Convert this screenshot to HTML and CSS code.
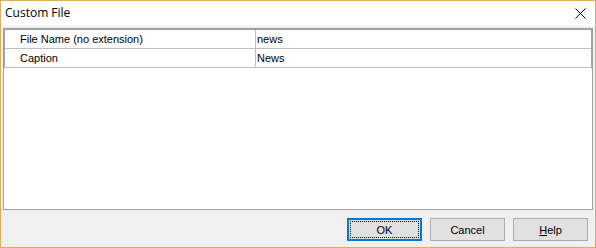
FILE: index.html
```html
<!DOCTYPE html>
<html>
<head>
<meta charset="utf-8">
<link rel="stylesheet" href="styles.css">
</head>
<body>
<div class="window">
  <div class="titlebar">
    <span class="title">Custom File</span>
    <svg class="close" width="11" height="11" viewBox="0 0 11 11"><path d="M0.5 0.5 L10.5 10.5 M10.5 0.5 L0.5 10.5" stroke="#000" stroke-width="1" fill="none"/></svg>
  </div>
  <div class="client">
    <div class="gridbox">
      <div class="grid">
        <div class="row">
          <div class="cell label">File Name (no extension)</div>
          <div class="cell value">news</div>
        </div>
        <div class="row">
          <div class="cell label">Caption</div>
          <div class="cell value">News</div>
        </div>
      </div>
    </div>
    <div class="buttons">
      <button class="btn default"><span class="focus">OK</span></button>
      <button class="btn">Cancel</button>
      <button class="btn"><u>H</u>elp</button>
    </div>
  </div>
</div>
</body>
</html>
```
FILE: styles.css
```css
html, body {
  margin: 0;
  padding: 0;
  background: #ffffff;
}
.window {
  width: 596px;
  height: 248px;
  box-sizing: border-box;
  border: 1px solid #e2aa5e;
  display: flex;
  flex-direction: column;
  font-family: "Liberation Sans", Arial, sans-serif;
  font-size: 11px;
  color: #000;
}
.titlebar {
  height: 25px;
  flex: none;
  background: #fff;
  display: flex;
  align-items: center;
  justify-content: space-between;
  padding-left: 4px;
  padding-right: 9px;
}
.title {
  font-family: "Open Sans", "Noto Sans", sans-serif;
  font-size: 12px;
  line-height: 16px;
  margin-top: -2px;
}
.close {
  display: block;
  margin-top: -1px;
}
.client {
  flex: 1;
  background: #f0f0f0;
  padding: 2px 2px 6px 2px;
  display: flex;
  flex-direction: column;
}
.gridbox {
  height: 182px;
  box-sizing: border-box;
  border: 1px solid #a0a0a0;
  background: #fff;
}
.grid {
  border: 1px solid #a0a0a0;
  border-bottom: none;
}
.row {
  display: flex;
  height: 19px;
  box-sizing: border-box;
  border-bottom: 1px solid #c0c0c0;
}
.cell {
  line-height: 18px;
  white-space: nowrap;
}
.label {
  width: 251px;
  box-sizing: border-box;
  padding-left: 15px;
  border-right: 1px solid #c0c0c0;
}
.value {
  flex: 1;
  padding-left: 1px;
}
.buttons {
  display: flex;
  justify-content: flex-end;
  gap: 8px;
  margin-top: 8px;
  margin-right: 5px;
}
.btn {
  width: 75px;
  height: 23px;
  box-sizing: border-box;
  margin: 0;
  padding: 0;
  border: 1px solid #adadad;
  background: #e1e1e1;
  font-family: "Liberation Sans", Arial, sans-serif;
  font-size: 11px;
  color: #000;
  display: flex;
  align-items: center;
  justify-content: center;
}
.btn.default {
  border: 2px solid #0078d7;
  padding: 1px;
}
.focus {
  flex: 1;
  align-self: stretch;
  display: flex;
  align-items: center;
  justify-content: center;
  border: 1px dotted #000;
}
```
